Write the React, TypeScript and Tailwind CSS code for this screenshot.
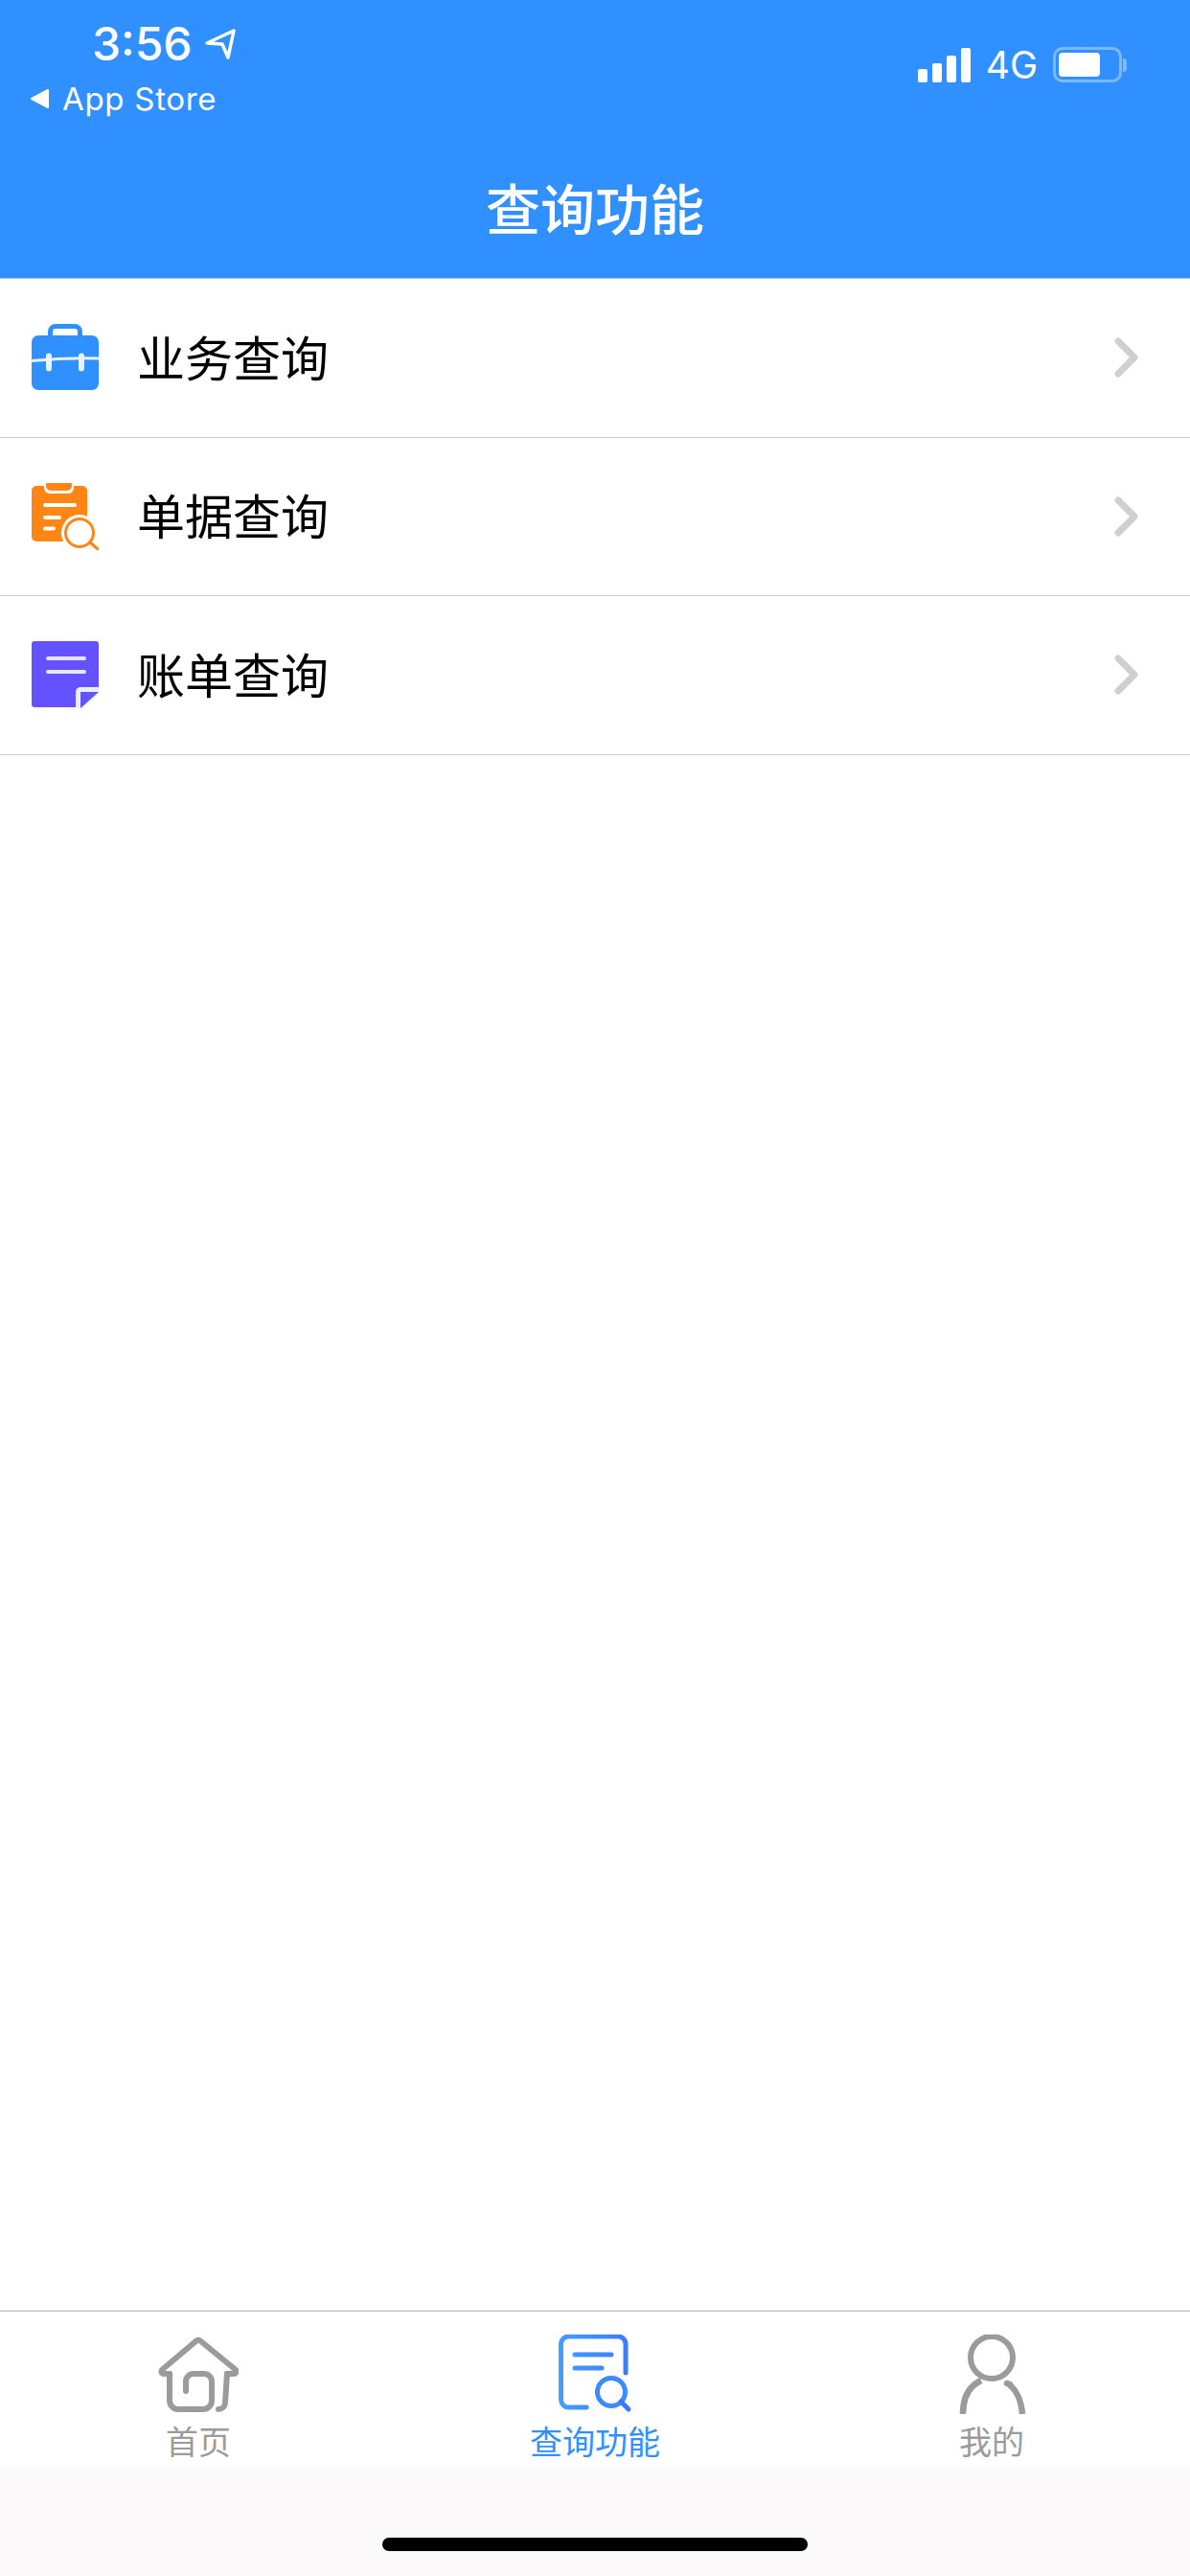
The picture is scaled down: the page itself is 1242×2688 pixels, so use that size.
const cjk = "font-['Noto_Sans_CJK_SC',sans-serif]";

function BriefcaseIcon() {
  return (
    <svg width="70" height="70" viewBox="0 0 70 70" className="shrink-0">
      <path d="M19.500 14V8a5.500 5.500 0 0 1 5.500-5.500h20A5.500 5.500 0 0 1 50.500 8v6" fill="none" stroke="#3090ff" strokeWidth="5" />
      <rect x="0" y="12" width="70" height="57" rx="7" fill="#3090ff" />
      <path d="M0 38.500Q35 35 70 36" fill="none" stroke="#e9f3ff" strokeWidth="3" />
      <path d="M18 33.500v13M52 33.500v13" stroke="#e9f3ff" strokeWidth="6" strokeLinecap="round" />
    </svg>
  );
}

function ClipboardIcon() {
  return (
    <svg width="70" height="70" viewBox="0 0 70 70" className="shrink-0">
      <rect x="0" y="3" width="58" height="58" rx="5" fill="#ff8615" />
      <rect x="13" y="-3" width="31" height="14" rx="6" fill="#fff" />
      <rect x="15" y="-3" width="27" height="11" rx="5" fill="#ff8615" />
      <path d="M14 23h31M14 36h15M14 47.500h9" stroke="#fff" strokeWidth="4" strokeLinecap="round" />
      <circle cx="50" cy="52" r="19" fill="#fff" />
      <circle cx="50" cy="52" r="14.500" fill="#fff" stroke="#ff8615" strokeWidth="3" />
      <path d="M61 62l8 7" stroke="#ff8615" strokeWidth="3" strokeLinecap="round" />
    </svg>
  );
}

function NoteIcon() {
  return (
    <svg width="70" height="70" viewBox="0 0 70 70" className="shrink-0">
      <path d="M3 0h64a3 3 0 0 1 3 3v66H3a3 3 0 0 1-3-3V3a3 3 0 0 1 3-3z" fill="#6452fe" />
      <path d="M17 18h38M17 32h38" stroke="#e8e6ff" strokeWidth="4" strokeLinecap="round" />
      <path d="M46 70V53a5 5 0 0 1 5-5h19v22z" fill="#e9f0ff" />
      <path d="M51 70V53h19z" fill="#6452fe" />
      <path d="M53 70L70 55v15z" fill="#fff" />
    </svg>
  );
}

function Chevron() {
  return (
    <svg width="26" height="42" viewBox="0 0 26 42" className="shrink-0">
      <path d="M4 4l17 17L4 38" fill="none" stroke="#cfcfcf" strokeWidth="7" strokeLinecap="round" strokeLinejoin="round" />
    </svg>
  );
}

function HomeIcon() {
  return (
    <svg width="84" height="84" viewBox="0 0 84 84">
      <path
        d="M12 41H6a2.500 2.500 0 0 1-1.500-4.500L40 6.500a3 3 0 0 1 4 0L80.500 36.500A2.500 2.500 0 0 1 79 41H72"
        fill="none"
        stroke="#9b9b9b"
        strokeWidth="6"
        strokeLinecap="round"
        strokeLinejoin="round"
      />
      <path
        d="M29 59V49a8 8 0 0 1 8-8H48a8 8 0 0 1 8 8V69a9 9 0 0 1-9 9H21a9 9 0 0 1-9-9V41"
        fill="none"
        stroke="#9b9b9b"
        strokeWidth="6"
        strokeLinecap="round"
      />
      <path d="M72 41L70 71a7 7 0 0 1-7 7" fill="none" stroke="#9b9b9b" strokeWidth="6" strokeLinecap="round" />
    </svg>
  );
}

function SearchDocIcon() {
  return (
    <svg width="84" height="84" viewBox="0 0 84 84">
      <defs>
        <linearGradient id="docGrad" x1="0" y1="0" x2="84" y2="0" gradientUnits="userSpaceOnUse">
          <stop offset="0" stopColor="#44a0ff" />
          <stop offset="1" stopColor="#3a78ff" />
        </linearGradient>
      </defs>
      <path
        d="M74 40V10a8 8 0 0 0-8-8H14.500a8 8 0 0 0-8 8v58a8 8 0 0 0 8 8H33"
        fill="none"
        stroke="url(#docGrad)"
        strokeWidth="5"
        strokeLinecap="round"
      />
      <path d="M21 21h38M21 35h28" stroke="url(#docGrad)" strokeWidth="5" strokeLinecap="round" />
      <circle cx="59" cy="60" r="14.500" fill="none" stroke="#3d8cff" strokeWidth="5" />
      <path d="M69 70l8 8" stroke="#3a78ff" strokeWidth="5" strokeLinecap="round" />
    </svg>
  );
}

function PersonIcon() {
  return (
    <svg width="84" height="84" viewBox="0 0 84 84">
      <circle cx="42" cy="24" r="22" fill="none" stroke="#9b9b9b" strokeWidth="6" />
      <path d="M12 83C12 66 18 54 31 48" fill="none" stroke="#9b9b9b" strokeWidth="6.500" />
      <path d="M60 52C68 58 73 70 74 83" fill="none" stroke="#9b9b9b" strokeWidth="6.500" />
      <path d="M58 51l3 1" stroke="#9b9b9b" strokeWidth="6.500" strokeLinecap="round" />
    </svg>
  );
}

const rows = [
  { label: '业务查询', icon: <BriefcaseIcon /> },
  { label: '单据查询', icon: <ClipboardIcon /> },
  { label: '账单查询', icon: <NoteIcon /> },
];

const tabs = [
  { label: '首页', icon: <HomeIcon />, color: 'text-[#9b9b9b]' },
  { label: '查询功能', icon: <SearchDocIcon />, color: 'text-[#3090ff]' },
  { label: '我的', icon: <PersonIcon />, color: 'text-[#9b9b9b]' },
];

function StatusBar() {
  return (
    <div className="flex justify-between items-start h-[173px] text-white font-['Inter',sans-serif]">
      <div className="pl-[31px] pt-[16px]">
        <div className="flex items-center pl-[65px] h-[60px] gap-[13px]">
          <span className="text-[48px] font-medium leading-none">3:56</span>
          <svg width="32" height="34" viewBox="0 0 32 34">
            <path d="M2 16L30 3 24 31 18 17z" fill="none" stroke="#fff" strokeWidth="3.500" strokeLinejoin="round" />
          </svg>
        </div>
        <div className="flex items-center h-[38px] mt-[8px] gap-[13px]">
          <svg width="21" height="22" viewBox="0 0 21 22">
            <path d="M19 2v18L2 11z" fill="#fff" stroke="#fff" strokeWidth="2" strokeLinejoin="round" />
          </svg>
          <span className="text-[33px] leading-none tracking-[0.7px]">App Store</span>
        </div>
      </div>
      <div className="flex items-center pr-[66px] pt-[49px]">
        <div className="flex items-end gap-[5px] h-[36px]">
          <div className="w-[10px] h-[14px] bg-white rounded-[2px]" />
          <div className="w-[10px] h-[20px] bg-white rounded-[2px]" />
          <div className="w-[10px] h-[28px] bg-white rounded-[2px]" />
          <div className="w-[10px] h-[36px] bg-white rounded-[2px]" />
        </div>
        <span className="text-[39px] leading-[36px] ml-[16px]">4G</span>
        <div className="flex items-center ml-[16px]">
          <div className="w-[72px] h-[37px] rounded-[10px] border-[3px] border-[#7db9ff] p-[3px]">
            <div className="w-[43px] h-full bg-white rounded-[4px]" />
          </div>
          <div className="w-[4px] h-[14px] ml-[1px] bg-[#7db9ff] rounded-r-full" />
        </div>
      </div>
    </div>
  );
}

export default function App() {
  return (
    <div className={`w-[1242px] h-[2688px] flex flex-col bg-white ${cjk}`}>
      <header className="h-[291px] shrink-0 bg-[#3090ff] border-b border-[#a8c9ee]">
        <StatusBar />
        <h1 className="text-center text-white text-[57px] font-medium leading-[84px]">查询功能</h1>
      </header>

      <main className="flex-1">
        {rows.map((row) => (
          <div
            key={row.label}
            className="flex items-center h-[165.500px] pl-[33px] pr-[53px] border-b border-[#cccccc]"
          >
            {row.icon}
            <span className="ml-[40px] flex-1 text-[50px] text-black leading-none pb-[5px]">{row.label}</span>
            <Chevron />
          </div>
        ))}
      </main>

      <nav className="h-[164px] shrink-0 border-t border-[#b0b0b0] bg-white grid grid-cols-3">
        {tabs.map((tab) => (
          <div key={tab.label} className="flex flex-col items-center pt-[24px]">
            {tab.icon}
            <span className={`text-[34px] leading-[46px] mt-[4px] ${tab.color}`}>{tab.label}</span>
          </div>
        ))}
      </nav>

      <div className="h-[113px] shrink-0 bg-[#fbf9fa] flex justify-center pt-[73px]">
        <div className="w-[444px] h-[14px] rounded-full bg-black" />
      </div>
    </div>
  );
}
